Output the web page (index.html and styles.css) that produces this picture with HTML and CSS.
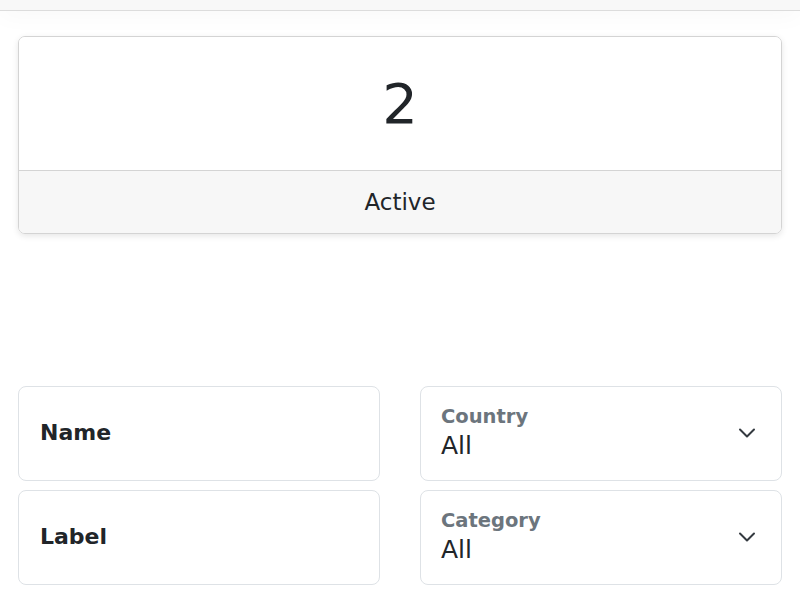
FILE: index.html
```html
<!DOCTYPE html>
<html lang="en">
<head>
  <meta charset="UTF-8">
  <meta name="viewport" content="width=device-width, initial-scale=1.0">
  <title>Status</title>
  <link rel="stylesheet" href="styles.css">
</head>
<body>
  <header class="topbar"></header>

  <main>
    <div class="stat-card">
      <div class="stat-value">2</div>
      <div class="stat-label">Active</div>
    </div>

    <form class="filters">
      <label class="field">
        <span class="field-title">Name</span>
      </label>

      <label class="field select-field">
        <span class="select-text">
          <span class="select-label">Country</span>
          <span class="select-value">All</span>
        </span>
        <svg class="chevron" width="18" height="18" viewBox="0 0 18 18">
          <path d="M2 5.5 9 12.5l7-7" fill="none" stroke="#343a40" stroke-width="2" stroke-linecap="round" stroke-linejoin="round"/>
        </svg>
      </label>

      <label class="field">
        <span class="field-title">Label</span>
      </label>

      <label class="field select-field">
        <span class="select-text">
          <span class="select-label">Category</span>
          <span class="select-value">All</span>
        </span>
        <svg class="chevron" width="18" height="18" viewBox="0 0 18 18">
          <path d="M2 5.5 9 12.5l7-7" fill="none" stroke="#343a40" stroke-width="2" stroke-linecap="round" stroke-linejoin="round"/>
        </svg>
      </label>
    </form>
  </main>
</body>
</html>
```

FILE: styles.css
```css
body {
  margin: 0;
  font-family: "DejaVu Sans", Verdana, sans-serif;
  background-color: #fff;
  color: #212529;
}

.topbar {
  height: 10px;
  background-color: #f8f8f8;
  border-bottom: 1px solid #dcdcdc;
  box-shadow: 0 2px 24px rgba(0, 0, 0, 0.05);
}

main {
  padding: 25px 18px 0;
}

.stat-card {
  border: 1px solid #d4d4d4;
  border-radius: 7px;
  overflow: hidden;
  box-shadow: 0 2px 6px rgba(0, 0, 0, 0.1);
}

.stat-value {
  height: 133px;
  display: flex;
  align-items: center;
  justify-content: center;
  font-size: 56px;
  background-color: #fff;
}

.stat-label {
  height: 62px;
  display: flex;
  align-items: center;
  justify-content: center;
  font-size: 23px;
  background-color: #f7f7f7;
  border-top: 1px solid #d4d4d4;
}

.filters {
  margin-top: 152px;
  display: grid;
  grid-template-columns: 1fr 1fr;
  column-gap: 40px;
  row-gap: 9px;
}

.field {
  height: 93px;
  border: 1px solid #dee2e6;
  border-radius: 8px;
  padding: 0 21px;
  display: flex;
  align-items: center;
}

.field-title {
  font-size: 22px;
  font-weight: bold;
  margin-top: -3px;
}

.select-field {
  justify-content: space-between;
  padding: 0 25px 0 20px;
}

.select-text {
  display: flex;
  flex-direction: column;
  margin-top: -2px;
}

.select-label {
  font-size: 19.5px;
  line-height: 24px;
  font-weight: bold;
  color: #6c757d;
}

.select-value {
  font-size: 25px;
  line-height: 30px;
  margin-top: 2px;
}

.chevron {
  margin-top: -2px;
}
```
